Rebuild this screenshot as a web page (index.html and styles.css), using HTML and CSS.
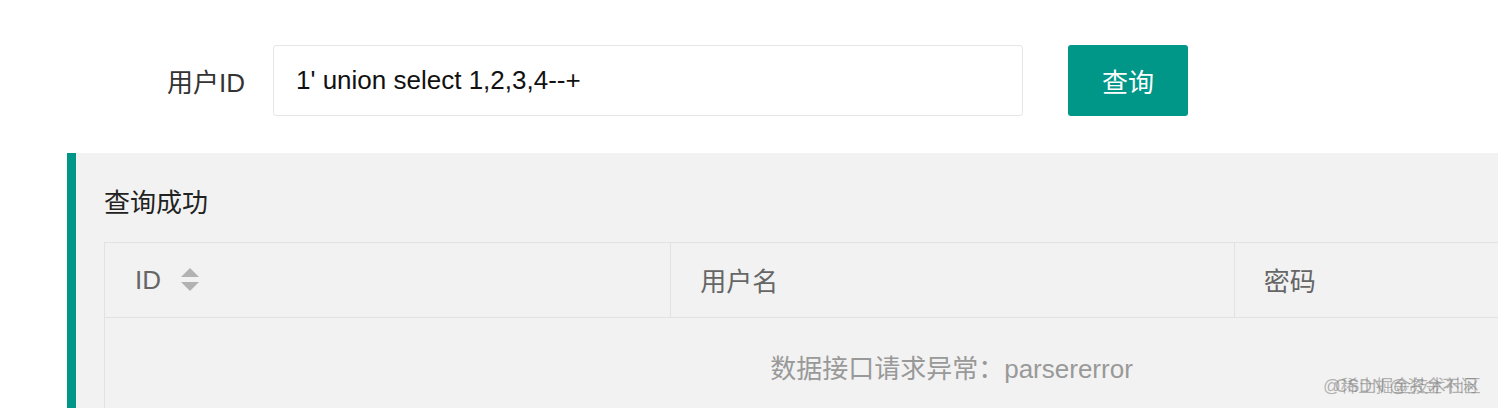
FILE: index.html
```html
<!DOCTYPE html>
<html lang="zh-CN">
<head>
<meta charset="utf-8">
<title>查询</title>
<link rel="stylesheet" href="styles.css">
</head>
<body>
<form class="query-form">
  <label class="form-label" for="uid">用户ID</label>
  <input class="form-input" id="uid" type="text" value="1' union select 1,2,3,4--+">
  <button class="btn" type="button">查询</button>
</form>
<section class="result-panel">
  <h2 class="result-title">查询成功</h2>
  <table class="data-table">
    <thead>
      <tr>
        <th class="col col-first"><span class="th-text">ID</span><span class="sort"><i class="sort-up"></i><i class="sort-down"></i></span></th>
        <th class="col col-mid">用户名</th>
        <th class="col">密码</th>
      </tr>
    </thead>
    <tbody>
      <tr>
        <td class="empty" colspan="3">数据接口请求异常：parsererror</td>
      </tr>
    </tbody>
  </table>
  <div class="watermark">
    <span class="wm-a">@稀土掘金技术社区</span>
    <span class="wm-b">CSDN @资金不闲</span>
  </div>
</section>
</body>
</html>
```

FILE: styles.css
```css
html, body {
  margin: 0;
  padding: 0;
  background: #ffffff;
  overflow: hidden;
}
body {
  width: 1498px;
  height: 408px;
  font-family: "Liberation Sans", "Noto Sans CJK SC", sans-serif;
  color: #333;
}
.query-form {
  display: flex;
  align-items: center;
  padding-top: 45px;
  height: 70px;
}
.form-label {
  width: 245px;
  text-align: right;
  font-size: 26px;
  color: #333;
  box-sizing: border-box;
}
.form-input {
  margin-left: 28px;
  width: 750px;
  height: 71px;
  box-sizing: border-box;
  border: 1px solid #e6e6e6;
  border-radius: 3px;
  padding: 0 0 0 22px;
  font-family: "Liberation Sans", "Noto Sans CJK SC", sans-serif;
  font-size: 26px;
  color: #111;
  background: #fff;
  outline: none;
}
.btn {
  margin-left: 45px;
  width: 120px;
  height: 71px;
  border: 0;
  border-radius: 3px;
  background: #009688;
  color: #fff;
  font-family: "Liberation Sans", "Noto Sans CJK SC", sans-serif;
  font-size: 26px;
  padding: 0;
}
.result-panel {
  position: relative;
  margin-top: 38px;
  margin-left: 67px;
  border-left: 9px solid #009688;
  background: #f2f2f2;
  padding: 35px 0 0 28px;
  height: 220px;
}
.result-title {
  margin: 0;
  font-size: 26px;
  line-height: 30px;
  font-weight: normal;
  color: #222;
}
.data-table {
  margin-top: 24px;
  border-collapse: collapse;
  table-layout: fixed;
  width: 1695px;
  background: #f2f2f2;
}
.data-table th,
.data-table td {
  border: 1px solid #e2e2e2;
}
.col {
  width: 564px;
  height: 75px;
  text-align: left;
  font-weight: normal;
  font-size: 26px;
  color: #666;
  padding: 0 0 2px 29px;
  box-sizing: border-box;
}
.col-first {
  width: 566px;
  padding-left: 30px;
}
.col-mid {
  width: 563px;
}
.th-text {
  vertical-align: middle;
}
.sort {
  display: inline-flex;
  flex-direction: column;
  align-items: center;
  gap: 5px;
  margin-left: 20px;
  vertical-align: middle;
}
.sort-up,
.sort-down {
  display: block;
  width: 0;
  height: 0;
  border-left: 9px solid transparent;
  border-right: 9px solid transparent;
}
.sort-up {
  border-bottom: 9px solid #b2b2b2;
}
.sort-down {
  border-top: 9px solid #b2b2b2;
}
.empty {
  height: 96px;
  text-align: center;
  font-size: 26px;
  color: #999;
  padding: 0;
  vertical-align: middle;
}
.watermark {
  position: absolute;
  left: 1247px;
  top: 219px;
  font-size: 17.5px;
  color: rgba(120, 120, 120, 0.55);
  white-space: nowrap;
}
.wm-a,
.wm-b {
  position: absolute;
  left: 0;
  top: 0;
}
.wm-b {
  left: 12px;
}
```
